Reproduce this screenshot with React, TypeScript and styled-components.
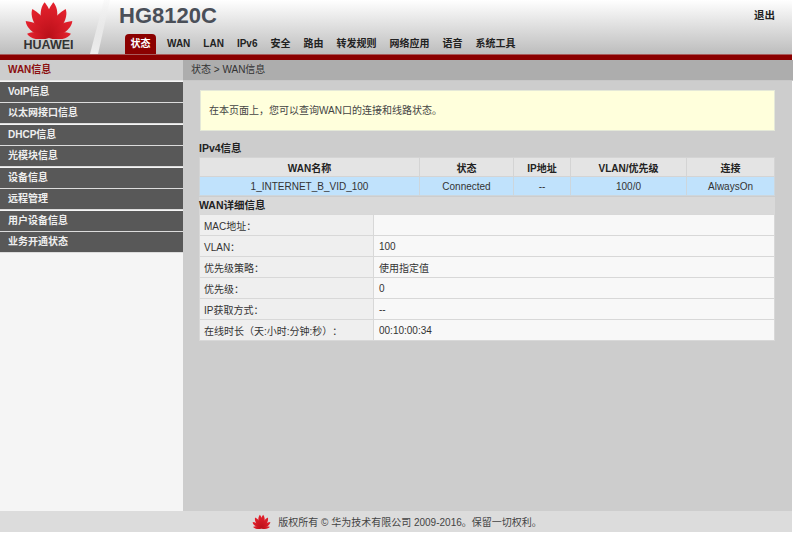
import React from 'react';
import styled, { createGlobalStyle } from 'styled-components';

const GlobalStyle = createGlobalStyle`
  html, body {
    margin: 0;
    padding: 0;
    background: #fff;
    font-family: "Liberation Sans", Arial, "Noto Sans CJK SC", sans-serif;
    text-spacing-trim: space-all;
  }
`;

const Page = styled.div`
  width: 792px;
  height: 532px;
  display: flex;
  flex-direction: column;
  background: #cdcdcd;
`;

const Header = styled.header`
  position: relative;
  height: 54px;
  flex: none;
  display: flex;
  background: linear-gradient(#ffffff, #bdbdbd);
  overflow: hidden;
`;

const LogoBox = styled.div`
  width: 97px;
  flex: none;
  display: flex;
  flex-direction: column;
  align-items: center;
`;

const LogoSvg = styled.svg`
  display: block;
  flex: none;
`;

const LogoWord = styled.div`
  font-size: 12.5px;
  font-weight: 700;
  line-height: 13px;
  color: #333;
`;

const Slash = styled.div`
  position: absolute;
  left: 90px;
  top: 0;
  width: 20px;
  height: 54px;
  background: linear-gradient(rgba(240, 240, 240, 0.3), #eeeeee);
  clip-path: polygon(70% 0, 100% 0, 40% 100%, 0 100%);
`;

const HeaderMain = styled.div`
  flex: 1;
  display: flex;
  flex-direction: column;
  padding-left: 22px;
`;

const TitleRow = styled.div`
  display: flex;
  justify-content: space-between;
  height: 34px;
`;

const Model = styled.div`
  font-size: 22px;
  font-weight: 700;
  line-height: 32px;
  color: #4a4f58;
`;

const Logout = styled.a`
  font-size: 10.5px;
  font-weight: 700;
  color: #222;
  margin: 9px 17px 0 0;
  line-height: 12px;
`;

const Nav = styled.nav`
  display: flex;
  height: 20px;
  gap: 3px;
  margin-left: 6px;
`;

const NavItem = styled.a<{ $active?: boolean }>`
  padding: 0 ${p => (p.$active ? '5.5px' : '5px')};
  margin-right: ${p => (p.$active ? '3px' : '0')};
  font-size: 10px;
  font-weight: 700;
  line-height: 20px;
  border-radius: 4px 4px 0 0;
  color: ${p => (p.$active ? '#fff' : '#222')};
  background: ${p => (p.$active ? '#8b0000' : 'transparent')};
`;

const RedBar = styled.div`
  height: 6px;
  flex: none;
  background: #8b0000;
  border-top: 1px solid #a85a5a;
  box-sizing: border-box;
`;

const Body = styled.div`
  flex: 1;
  display: flex;
  min-height: 0;
`;

const Sidebar = styled.aside`
  width: 183px;
  flex: none;
  background: #f5f5f5;
`;

const MenuItem = styled.a<{ $active?: boolean }>`
  display: block;
  height: 20px;
  margin-bottom: 0.5px;
  padding-left: 8px;
  font-size: 10px;
  font-weight: 700;
  line-height: 20px;
  color: ${p => (p.$active ? '#8b1010' : '#efefef')};
  background: ${p => (p.$active ? '#cdcdcd' : '#585858')};
  border-bottom: 1px solid ${p => (p.$active ? '#e6e6e6' : '#dcdcdc')};
`;

const Main = styled.main`
  flex: 1;
  display: flex;
  flex-direction: column;
`;

const Breadcrumb = styled.div`
  height: 20px;
  padding-left: 8px;
  background: #adadad;
  font-size: 10px;
  line-height: 20px;
  color: #333;
`;

const Content = styled.div`
  flex: 1;
  padding: 9px 18px 0 16px;
  border-top: 1px solid #c8c8c8;
`;

const Notice = styled.div`
  height: 41px;
  margin: 0 0 10px 1px;
  padding-left: 8px;
  background: #ffffdc;
  border: 1px solid #e4e8d8;
  box-sizing: border-box;
  font-size: 10px;
  line-height: 40px;
  color: #444;
`;

const SectionTitle = styled.h3<{ $band?: boolean }>`
  margin: ${p => (p.$band ? '1px' : '0')} 0 0;
  height: ${p => (p.$band ? '17px' : '16px')};
  font-size: 10.5px;
  font-weight: 700;
  line-height: ${p => (p.$band ? '17px' : '15px')};
  color: #222;
  background: ${p => (p.$band ? '#d9d9d9' : 'transparent')};
`;

const Table = styled.table`
  width: 100%;
  border-collapse: collapse;
  table-layout: fixed;
  font-size: 10px;
`;

const HeadCell = styled.th`
  height: 18px;
  padding: 0;
  background: #e4e4e4;
  border: 1px solid #d4d4d4;
  font-size: 10px;
  font-weight: 700;
  color: #222;
  text-align: center;
`;

const DataCell = styled.td`
  height: 18px;
  padding: 0;
  background: #c0e2fc;
  border: 1px solid #cdd6dc;
  color: #333;
  text-align: center;
`;

const LabelCell = styled.td`
  width: 169px;
  height: 20px;
  padding: 0 0 0 4px;
  background: #efefef;
  border: 1px solid #d8d8d8;
  color: #333;
`;

const ValueCell = styled.td`
  height: 20px;
  padding: 0 0 0 5px;
  background: #f8f8f8;
  border: 1px solid #d8d8d8;
  color: #333;
`;

const Footer = styled.footer`
  height: 21px;
  flex: none;
  display: flex;
  align-items: center;
  justify-content: center;
  gap: 7px;
  padding-left: 2px;
  background: #dcdcdc;
  font-size: 10px;
  color: #444;
`;

const petals: [number, number][] = [
  [10, 1],
  [33, 0.93],
  [57, 0.8],
  [82, 0.62],
];

function HuaweiMark({ size, id }: { size: number; id: string }) {
  return (
    <LogoSvg width={size} height={size * 0.78} viewBox="-50 -76 100 78">
      <defs>
        <linearGradient id={id} x1="0" y1="0" x2="0" y2="1">
          <stop offset="0" stopColor="#e6222e" />
          <stop offset="1" stopColor="#b80f18" />
        </linearGradient>
      </defs>
      {petals.flatMap(([a, s]) =>
        [1, -1].map(side => (
          <path
            key={`${a}${side}`}
            transform={`scale(${side},1) rotate(${a}) scale(${s})`}
            fill={`url(#${id})`}
            d="M0 0 C-14 -20 -18 -46 -4 -72 C12 -60 14 -26 0 0Z"
          />
        ))
      )}
    </LogoSvg>
  );
}

const navItems = ['状态', 'WAN', 'LAN', 'IPv6', '安全', '路由', '转发规则', '网络应用', '语音', '系统工具'];
const menuItems = ['WAN信息', 'VoIP信息', '以太网接口信息', 'DHCP信息', '光模块信息', '设备信息', '远程管理', '用户设备信息', '业务开通状态'];
const details: [string, string][] = [
  ['MAC地址：', ''],
  ['VLAN：', '100'],
  ['优先级策略：', '使用指定值'],
  ['优先级：', '0'],
  ['IP获取方式：', '--'],
  ['在线时长（天:小时:分钟:秒）：', '00:10:00:34'],
];

export default function App() {
  return (
    <Page>
      <GlobalStyle />
      <Header>
        <LogoBox>
          <HuaweiMark size={50} id="petal-top" />
          <LogoWord>HUAWEI</LogoWord>
        </LogoBox>
        <Slash />
        <HeaderMain>
          <TitleRow>
            <Model>HG8120C</Model>
            <Logout>退出</Logout>
          </TitleRow>
          <Nav>
            {navItems.map((n, i) => (
              <NavItem key={n} $active={i === 0}>{n}</NavItem>
            ))}
          </Nav>
        </HeaderMain>
      </Header>
      <RedBar />
      <Body>
        <Sidebar>
          {menuItems.map((m, i) => (
            <MenuItem key={m} $active={i === 0}>{m}</MenuItem>
          ))}
        </Sidebar>
        <Main>
          <Breadcrumb>状态 &gt; WAN信息</Breadcrumb>
          <Content>
            <Notice>在本页面上，您可以查询WAN口的连接和线路状态。</Notice>
            <SectionTitle>IPv4信息</SectionTitle>
            <Table>
              <colgroup>
                <col style={{ width: 220 }} />
                <col style={{ width: 94 }} />
                <col style={{ width: 57 }} />
                <col style={{ width: 116 }} />
                <col style={{ width: 88 }} />
              </colgroup>
              <thead>
                <tr>
                  <HeadCell>WAN名称</HeadCell>
                  <HeadCell>状态</HeadCell>
                  <HeadCell>IP地址</HeadCell>
                  <HeadCell>VLAN/优先级</HeadCell>
                  <HeadCell>连接</HeadCell>
                </tr>
              </thead>
              <tbody>
                <tr>
                  <DataCell>1_INTERNET_B_VID_100</DataCell>
                  <DataCell>Connected</DataCell>
                  <DataCell>--</DataCell>
                  <DataCell>100/0</DataCell>
                  <DataCell>AlwaysOn</DataCell>
                </tr>
              </tbody>
            </Table>
            <SectionTitle $band>WAN详细信息</SectionTitle>
            <Table>
              <tbody>
                {details.map(([k, v]) => (
                  <tr key={k}>
                    <LabelCell>{k}</LabelCell>
                    <ValueCell>{v}</ValueCell>
                  </tr>
                ))}
              </tbody>
            </Table>
          </Content>
        </Main>
      </Body>
      <Footer>
        <HuaweiMark size={19} id="petal-foot" />
        <span>版权所有 © 华为技术有限公司 2009-2016。保留一切权利。</span>
      </Footer>
    </Page>
  );
}
